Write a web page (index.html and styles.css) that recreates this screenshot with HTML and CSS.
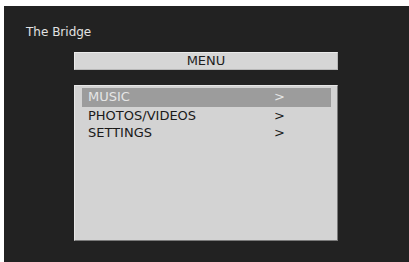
FILE: index.html
```html
<!DOCTYPE html>
<html>
<head>
<meta charset="utf-8">
<link rel="stylesheet" href="styles.css">
</head>
<body>
<div class="screen">
  <div class="title">The Bridge</div>
  <div class="header">MENU</div>
  <div class="panel">
    <div class="row active"><span class="label">MUSIC</span><span class="arrow">&gt;</span></div>
    <div class="row"><span class="label">PHOTOS/VIDEOS</span><span class="arrow">&gt;</span></div>
    <div class="row"><span class="label">SETTINGS</span><span class="arrow">&gt;</span></div>
  </div>
</div>
</body>
</html>
```
FILE: styles.css
```css
html, body {
  margin: 0;
  padding: 0;
  background: #ffffff;
  width: 409px;
  height: 262px;
  overflow: hidden;
}
body {
  padding: 6px 0 0 4px;
  box-sizing: border-box;
  font-family: "DejaVu Sans", Verdana, sans-serif;
  font-size: 13px;
}
.screen {
  background: #222222;
  width: 405px;
  height: 256px;
  box-sizing: border-box;
  padding-top: 18px;
  display: flex;
  flex-direction: column;
}
.title {
  color: #e2e2e2;
  font-size: 12px;
  line-height: 16px;
  padding-left: 22px;
  height: 16px;
}
.header {
  margin: 12px 0 0 70px;
  width: 264px;
  height: 18px;
  box-sizing: border-box;
  background: #d6d6d6;
  border: 1px solid #ebebeb;
  border-right-color: #b8b8b8;
  border-bottom-color: #b8b8b8;
  color: #1e1e1e;
  text-align: center;
  line-height: 16px;
}
.panel {
  margin: 15px 0 0 70px;
  width: 264px;
  height: 156px;
  box-sizing: border-box;
  background: #d3d3d3;
  border: 1px solid #e6e6e6;
  border-right-color: #7a7a7a;
  border-bottom-color: #7a7a7a;
  padding: 2px 6px 0 7px;
}
.row {
  display: flex;
  height: 17px;
  line-height: 17px;
  color: #1a1a1a;
  padding-left: 6px;
}
.row.active {
  background: #9c9c9c;
  color: #e6e6e6;
  height: 19px;
}
.label {
  width: 186px;
}
```
